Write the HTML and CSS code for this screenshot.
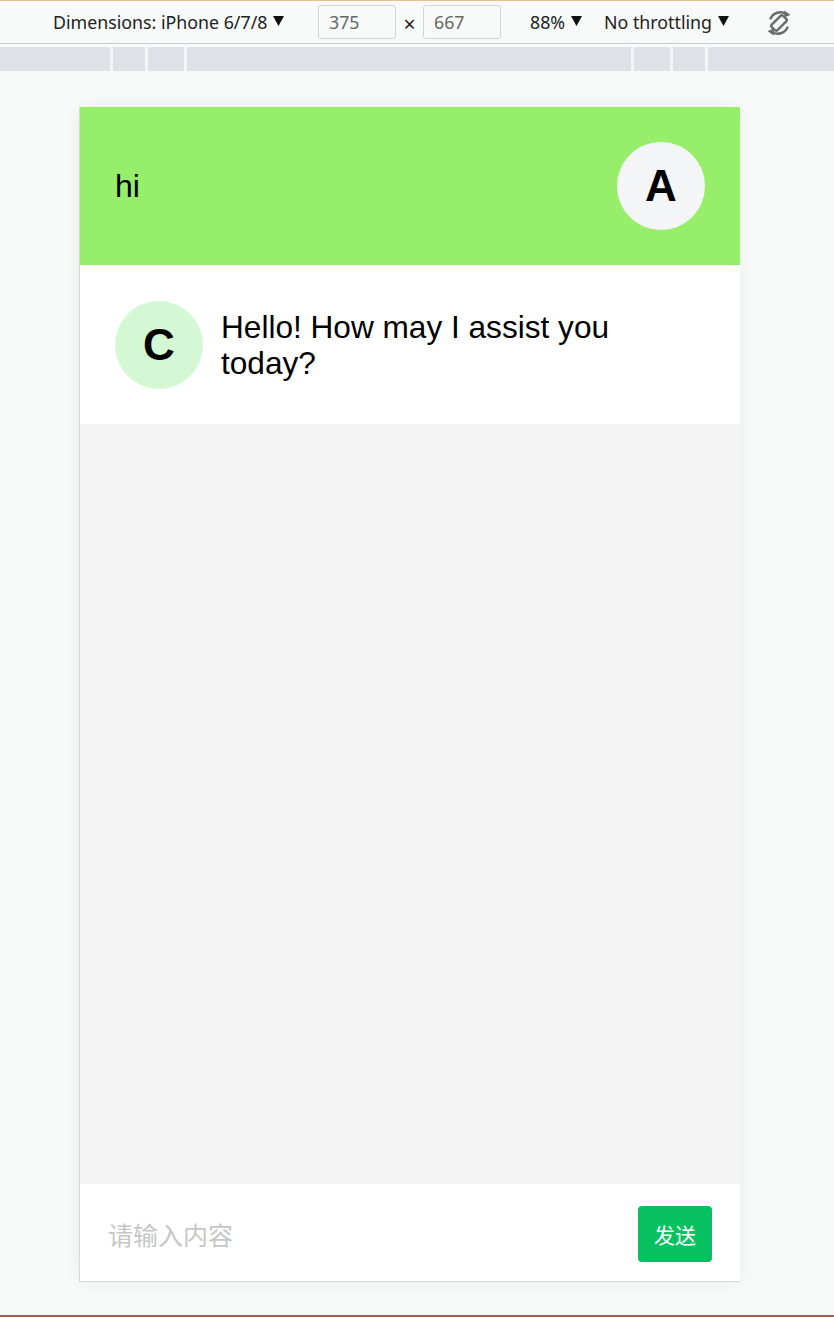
FILE: index.html
```html
<!DOCTYPE html>
<html lang="zh">
<head>
<meta charset="utf-8">
<title>Chat</title>
<link rel="stylesheet" href="styles.css">
</head>
<body>
<div class="screen">
  <div class="topline"></div>
  <div class="toolbar">
    <div class="tb-item tb-dim">Dimensions: iPhone 6/7/8<svg class="tri" viewBox="0 0 10 9"><path d="M0 0H10L5 9Z"/></svg></div>
    <div class="tb-box">375</div>
    <div class="tb-x">×</div>
    <div class="tb-box">667</div>
    <div class="tb-item tb-zoom">88%<svg class="tri" viewBox="0 0 10 9"><path d="M0 0H10L5 9Z"/></svg></div>
    <div class="tb-item tb-throttle">No throttling<svg class="tri" viewBox="0 0 10 9"><path d="M0 0H10L5 9Z"/></svg></div>
    <svg class="rotate" viewBox="0 0 28 28">
      <g fill="none" stroke="#6b6b6b" stroke-width="2.4" stroke-linecap="round">
        <rect x="10" y="6" width="8" height="16" rx="1.8" transform="rotate(45 14 14)"/>
        <path d="M5.5 9.5A11 11 0 0 1 21 4.8"/>
        <path d="M22.5 18.5A11 11 0 0 1 7 23.2"/>
      </g>
      <g fill="#6b6b6b">
        <path d="M19.5 1.5L25.5 6L19 8.5Z"/>
        <path d="M8.5 26.5L2.5 22L9 19.5Z"/>
      </g>
    </svg>
  </div>
  <div class="ruler">
    <span></span><i></i><span></span><i></i><span></span><i></i><span></span><i></i><span></span><i></i><span></span><i></i><span></span>
  </div>
  <div class="stage">
    <div class="phone">
      <header class="chat-header">
        <div class="chat-title">hi</div>
        <div class="avatar avatar-user">A</div>
      </header>
      <div class="message">
        <div class="avatar avatar-bot">C</div>
        <div class="message-text">Hello! How may I assist you today?</div>
      </div>
      <div class="chat-body"></div>
      <footer class="composer">
        <input class="composer-input" type="text" placeholder="请输入内容">
        <button class="send-btn">发送</button>
      </footer>
    </div>
  </div>
  <div class="bottomline"></div>
</div>
</body>
</html>
```

FILE: styles.css
```css
html, body {
  margin: 0;
  padding: 0;
}
body {
  background: #f8f9f9;
  font-family: "Liberation Sans", Arial, sans-serif;
}
.screen {
  height: 1317px;
  display: flex;
  flex-direction: column;
  overflow: hidden;
}
.topline {
  height: 1px;
  background: #e3c08f;
  flex: none;
}
.toolbar {
  height: 42px;
  flex: none;
  border-bottom: 1px solid #c9ccd0;
  background: #f8f9f9;
  display: flex;
  align-items: center;
  padding-left: 53px;
  font-family: "Noto Sans", "Open Sans", sans-serif;
  font-size: 17.8px;
  color: #222;
}
.tb-item {
  display: flex;
  align-items: center;
  white-space: nowrap;
}
.tri {
  width: 11px;
  height: 10px;
  margin-left: 6px;
  margin-top: -3px;
  fill: #111;
}
.tb-dim { width: 265px; }
.tb-box {
  width: 66px;
  height: 32px;
  border: 1px solid #d2d4d6;
  border-radius: 3px;
  padding-left: 10px;
  display: flex;
  align-items: center;
  color: #666;
  background: #f8f9f9;
}
.tb-x {
  width: 27px;
  text-align: center;
  font-size: 21px;
  color: #222;
  padding-top: 3px;
}
.tb-zoom { width: 74px; margin-left: 29px; }
.tb-throttle { width: 161px; }
.rotate {
  width: 28px;
  height: 28px;
  margin-top: 1px;
}
.ruler {
  flex: none;
  margin-top: 3px;
  height: 24px;
  display: grid;
  grid-template-columns: 110px 3px 32px 3px 36px 3px 444px 3px 36px 3px 32px 3px 1fr;
  background: #dee1e6;
}
.ruler i {
  background: #f4f5f6;
}
.stage {
  flex: 1;
  padding-top: 36px;
  padding-left: 79px;
}
.phone {
  width: 660px;
  height: 1174px;
  border-left: 1px solid #d8d8d8;
  border-bottom: 1px solid #d8d8d8;
  box-shadow: 0 0 18px rgba(0, 0, 0, 0.06);
  display: flex;
  flex-direction: column;
  background: #f4f4f4;
}
.chat-header {
  height: 158px;
  flex: none;
  background: #97ee6b;
  display: flex;
  align-items: center;
  justify-content: space-between;
  padding: 0 35px 0 35px;
}
.chat-title {
  font-size: 32px;
  color: #000;
}
.avatar {
  width: 88px;
  height: 88px;
  border-radius: 50%;
  display: flex;
  align-items: center;
  justify-content: center;
  font-weight: bold;
  font-size: 44px;
  color: #000;
  flex: none;
}
.avatar-user { background: #f4f5f7; }
.avatar-bot { background: #d3f8d3; }
.message {
  height: 159px;
  box-sizing: border-box;
  flex: none;
  background: #fff;
  display: flex;
  align-items: center;
  gap: 18px;
  padding: 0 36px 0 35px;
}
.message-text {
  font-size: 31.6px;
  line-height: 36px;
  color: #000;
}
.chat-body {
  flex: 1;
  background: #f4f4f4;
}
.composer {
  height: 97px;
  box-sizing: border-box;
  flex: none;
  background: #fff;
  display: flex;
  align-items: center;
  padding: 3px 28px 0 28px;
}
.composer-input {
  flex: 1;
  border: none;
  outline: none;
  background: transparent;
  padding: 0;
  font-family: "Noto Sans CJK SC", sans-serif;
  font-size: 25px;
  color: #333;
}
.composer-input::placeholder {
  color: #c6c6c6;
}
.send-btn {
  width: 74px;
  height: 56px;
  border: none;
  border-radius: 4px;
  background: #07c160;
  color: #fff;
  font-family: "Noto Sans CJK SC", sans-serif;
  font-size: 21px;
  padding: 0;
}
.bottomline {
  flex: none;
  height: 2px;
  background: #a65e4e;
}
```
